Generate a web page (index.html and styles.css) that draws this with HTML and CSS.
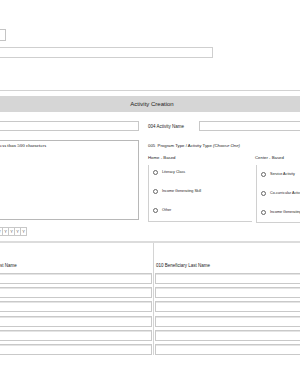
FILE: index.html
```html
<!DOCTYPE html>
<html lang="en">
<head>
    <meta charset="UTF-8">
    <meta name="viewport" content="width=device-width, initial-scale=1.0">
    <title>Activity Creation</title>
    <link rel="stylesheet" href="styles.css">
</head>
<body>
    <div class="page">
        <!-- Parte alta del modulo -->
        <div class="top">
            <div class="check"></div>
            <div class="long-input"></div>
        </div>

        <div class="section">
            <div class="section-title">Activity Creation</div>

            <div class="creation">
                <div class="col-left">
                    <div class="field"></div>
                    <div class="textarea">ess than 500 characters</div>
                    <div class="date">
                        <span>Y</span><span>Y</span><span>Y</span><span>Y</span><span>Y</span>
                    </div>
                </div>

                <div class="col-right">
                    <div class="name-row">
                        <label>004 Activity Name</label>
                        <div class="field"></div>
                    </div>
                    <div class="type-label">005 &nbsp;Program Type / Activity Type <em>(Choose One)</em></div>
                    <div class="groups">
                        <div class="group home">
                            <div class="group-title">Home - Based</div>
                            <div class="group-box">
                                <div class="radio"><span class="dot"></span>Literacy Class</div>
                                <div class="radio"><span class="dot"></span>Income Generating Skill</div>
                                <div class="radio"><span class="dot"></span>Other</div>
                            </div>
                        </div>
                        <div class="group center">
                            <div class="group-title">Center - Based</div>
                            <div class="group-box">
                                <div class="radio"><span class="dot"></span>Service Activity</div>
                                <div class="radio"><span class="dot"></span>Co-curricular Activity</div>
                                <div class="radio"><span class="dot"></span>Income Generating Skill</div>
                            </div>
                        </div>
                    </div>
                </div>
            </div>
        </div>

        <!-- Beneficiari -->
        <div class="beneficiary">
            <div class="ben-col ben-first">
                <div class="ben-label">st Name</div>
                <div class="ben-inputs">
                    <div class="ben-input"></div>
                    <div class="ben-input"></div>
                    <div class="ben-input"></div>
                    <div class="ben-input"></div>
                    <div class="ben-input"></div>
                    <div class="ben-input"></div>
                </div>
            </div>
            <div class="ben-col ben-last">
                <div class="ben-label">010 Beneficiary Last Name</div>
                <div class="ben-inputs">
                    <div class="ben-input"></div>
                    <div class="ben-input"></div>
                    <div class="ben-input"></div>
                    <div class="ben-input"></div>
                    <div class="ben-input"></div>
                    <div class="ben-input"></div>
                </div>
            </div>
        </div>
    </div>
</body>
</html>
```

FILE: styles.css
```css
/* Stile generale */
* {
    box-sizing: border-box;
}

body {
    font-family: "Liberation Sans", Arial, sans-serif;
    margin: 0;
    background-color: #ffffff;
    color: #222;
}

.page {
    width: 300px;
    height: 382px;
    overflow: hidden;
}

/* Parte alta */
.top {
    height: 90px;
    padding-top: 29px;
}

.check {
    width: 6px;
    height: 12px;
    border: 1px solid #c4c4c4;
    border-left: none;
}

.long-input {
    margin-top: 6px;
    width: 213px;
    height: 11px;
    border: 1px solid #cfcfcf;
    border-left: none;
}

/* Sezione creazione attivita */
.section {
    border-top: 1px solid #d2d2d2;
    padding-top: 5px;
}

.section-title {
    background: #d6d6d6;
    height: 16px;
    line-height: 16px;
    text-align: center;
    padding-left: 4px;
    font-size: 6px;
    color: #222;
}

.creation {
    display: grid;
    grid-template-columns: 139px 1fr;
    column-gap: 9px;
    margin-top: 9px;
}

.field {
    height: 10px;
    border: 1px solid #c8c8c8;
    border-left: none;
}

.textarea {
    margin-top: 9px;
    height: 80px;
    border: 1px solid #b8b8b8;
    border-left: none;
    padding-top: 2px;
    font-family: "Liberation Serif", "Times New Roman", serif;
    font-size: 5px;
    line-height: 6px;
}

.date {
    display: flex;
    margin-top: 7px;
    margin-left: -4px;
}

.date span {
    width: 7px;
    height: 9px;
    border: 1px solid #c8c8c8;
    margin-right: -1px;
    font-size: 4px;
    line-height: 7px;
    text-align: center;
    color: #555;
}

/* Colonna destra */
.name-row {
    display: flex;
    align-items: center;
}

.name-row label {
    width: 51px;
    font-size: 4.5px;
}

.name-row .field {
    flex: 1;
    border-right: none;
    border-left: 1px solid #c8c8c8;
}

.type-label {
    margin-top: 12px;
    font-size: 4.3px;
    line-height: 6px;
}

.groups {
    display: flex;
    margin-top: 6px;
}

.group-title {
    font-size: 4.3px;
    line-height: 6px;
}

.home {
    width: 104px;
}

.center {
    margin-left: 3px;
    flex: 1;
}

.group-box {
    margin-top: 4px;
    display: flex;
    flex-direction: column;
    gap: 5px;
    border-left: 1px solid #d0d0d0;
    border-bottom: 1px solid #d0d0d0;
    padding-bottom: 4px;
}

.center .group-box {
    margin-left: 1px;
    padding-top: 2px;
    padding-bottom: 3px;
}

.radio {
    display: flex;
    align-items: center;
    height: 14px;
    padding-left: 4px;
    font-size: 3.7px;
    white-space: nowrap;
}

.dot {
    width: 5px;
    height: 5px;
    border: 0.8px solid #666;
    border-radius: 50%;
    margin-right: 4px;
    flex-shrink: 0;
}

/* Beneficiari */
.beneficiary {
    margin-top: 5px;
    border-top: 2px solid #dcdcdc;
    display: grid;
    grid-template-columns: 154px 1fr;
}

.ben-first {
    border-right: 1px solid #d4d4d4;
}

.ben-label {
    height: 30px;
    padding-top: 20px;
    font-size: 4.5px;
    line-height: 6px;
}

.ben-last .ben-label {
    padding-left: 2px;
}

.ben-inputs {
    display: flex;
    flex-direction: column;
    gap: 3.2px;
}

.ben-input {
    height: 11px;
    border: 1px solid #c9c9c9;
    box-shadow: inset 0 1px 0 #e4e4e4;
}

.ben-first .ben-input {
    margin-right: 1px;
    border-left: none;
}

.ben-last .ben-input {
    margin-left: 1px;
    border-right: none;
}
```
